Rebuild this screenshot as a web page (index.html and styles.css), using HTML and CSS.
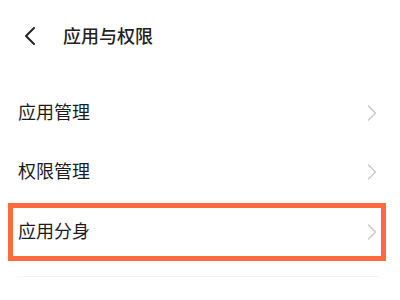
FILE: index.html
```html
<!DOCTYPE html>
<html lang="zh-CN">
<head>
    <meta charset="UTF-8">
    <meta name="viewport" content="width=device-width, initial-scale=1.0">
    <title>应用与权限</title>
    <link rel="stylesheet" href="styles.css">
</head>
<body>
    <div class="header">
        <svg class="back" width="14" height="20" viewBox="0 0 14 20">
            <path d="M11 2 L3 10 L11 18" fill="none" stroke="#222" stroke-width="2" stroke-linecap="round" stroke-linejoin="round"/>
        </svg>
        <h1 class="title">应用与权限</h1>
    </div>

    <div class="list">
        <div class="row">
            <span class="row-text">应用管理</span>
            <svg class="chevron" width="10" height="16" viewBox="0 0 10 16">
                <path d="M1.5 1 L8.5 8 L1.5 15" fill="none" stroke="#c9c9c9" stroke-width="1.5" stroke-linecap="round" stroke-linejoin="round"/>
            </svg>
        </div>
        <div class="row">
            <span class="row-text">权限管理</span>
            <svg class="chevron" width="10" height="16" viewBox="0 0 10 16">
                <path d="M1.5 1 L8.5 8 L1.5 15" fill="none" stroke="#c9c9c9" stroke-width="1.5" stroke-linecap="round" stroke-linejoin="round"/>
            </svg>
        </div>
        <div class="row row-highlight">
            <span class="row-text">应用分身</span>
            <svg class="chevron" width="10" height="16" viewBox="0 0 10 16">
                <path d="M1.5 1 L8.5 8 L1.5 15" fill="none" stroke="#c9c9c9" stroke-width="1.5" stroke-linecap="round" stroke-linejoin="round"/>
            </svg>
        </div>
        <div class="divider"></div>
    </div>
</body>
</html>
```

FILE: styles.css
```css
* {
    margin: 0;
    padding: 0;
    box-sizing: border-box;
}

body {
    font-family: "Noto Sans CJK SC", "Noto Sans", sans-serif;
    background: #fff;
    color: #1c1c1c;
    width: 400px;
    height: 300px;
    overflow: hidden;
}

.header {
    height: 72px;
    display: flex;
    align-items: center;
    padding-left: 23px;
}

.back {
    display: block;
}

.title {
    font-size: 18px;
    font-weight: 500;
    margin-left: 26px;
    margin-top: -3px;
    color: #222;
}

.list {
    margin-top: 11px;
}

.row {
    height: 59px;
    display: flex;
    align-items: center;
    justify-content: space-between;
    padding: 0 23px 0 18px;
    position: relative;
}

.row-text {
    font-size: 18px;
    margin-top: -4px;
}

.chevron {
    display: block;
}

.row-highlight {
    height: 58px;
    margin-top: 2px;
}

.row-highlight::after {
    content: "";
    position: absolute;
    top: 0;
    bottom: 0;
    left: 8px;
    right: 14px;
    border: 5px solid #fd6b3d;
}

.divider {
    height: 1px;
    background: #f3f3f3;
    margin: 15px 20px 0 17px;
}
```
